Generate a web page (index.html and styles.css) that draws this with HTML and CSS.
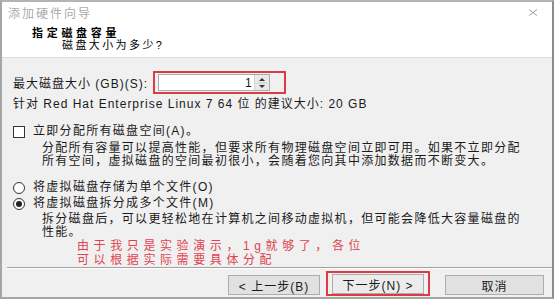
FILE: index.html
```html
<!DOCTYPE html>
<html>
<head>
  <meta charset="utf-8">
  <title>添加硬件向导</title>
  <link rel="stylesheet" href="styles.css">
</head>
<body>
  <div class="wizard">
    <div class="titlebar">
      <span class="title">添加硬件向导</span>
      <svg class="close" width="10" height="7" viewBox="0 0 10 7">
        <path d="M1 0.5 L9 6.5 M9 0.5 L1 6.5" stroke="#9a9a9a" stroke-width="1"/>
      </svg>
    </div>

    <div class="header">
      <div class="heading">指定磁盘容量</div>
      <div class="subheading">磁盘大小为多少?</div>
    </div>

    <div class="content">
      <div class="size-row">
        <label class="size-label">最大磁盘大小 (GB)(S):</label>
        <div class="mark">
          <div class="spinbox">
            <span class="value">1</span>
            <span class="arrows">
              <svg width="14" height="16" viewBox="0 0 14 16">
                <path d="M7 3 L10 6 L4 6 Z" fill="#333"/>
                <path d="M2 8 H12" stroke="#c8c8c8"/>
                <path d="M4 10 L10 10 L7 13 Z" fill="#333"/>
              </svg>
            </span>
          </div>
        </div>
      </div>
      <p class="hint">针对 Red Hat Enterprise Linux 7 64 位 的建议大小: 20 GB</p>

      <div class="option first"><span class="check"></span>立即分配所有磁盘空间(A)。</div>
      <p class="desc">分配所有容量可以提高性能，但要求所有物理磁盘空间立即可用。如果不立即分配<br>所有空间，虚拟磁盘的空间最初很小，会随着您向其中添加数据而不断变大。</p>

      <div class="option radio-first"><span class="radio"></span>将虚拟磁盘存储为单个文件(O)</div>
      <div class="option radio-second"><span class="radio on"></span>将虚拟磁盘拆分成多个文件(M)</div>
      <p class="desc tight">拆分磁盘后，可以更轻松地在计算机之间移动虚拟机，但可能会降低大容量磁盘的<br>性能。</p>

      <p class="note">由于我只是实验演示，1g就够了，各位<br>可以根据实际需要具体分配</p>
    </div>

    <div class="footer">
      <button class="btn prev">&lt; 上一步(B)</button>
      <div class="mark next-mark"><button class="btn next">下一步(N) &gt;</button></div>
      <button class="btn cancel">取消</button>
    </div>
  </div>
</body>
</html>
```

FILE: styles.css
```css
body {
  margin: 0;
  background: #f0f0f0;
  font-family: "Liberation Sans", "Noto Sans CJK SC", sans-serif;
  font-size: 12px;
  letter-spacing: 1.3px;
  color: #1a1a1a;
}

.wizard {
  width: 554px;
  height: 299px;
  box-sizing: border-box;
  border-top: 2px solid #b4b4b4;
  border-left: 2px solid #a6a6a6;
  border-right: 2px solid #8c8c8c;
  border-bottom: 2px solid #a6a6a6;
  background: #f0f0f0;
  display: flex;
  flex-direction: column;
}

.titlebar {
  background: #fff;
  height: 20px;
  display: flex;
  align-items: center;
  justify-content: space-between;
  padding: 0 14px 0 6px;
}

.title {
  color: #ababab;
  font-size: 12px;
  letter-spacing: 2px;
}

.header {
  background: #fff;
  height: 35px;
  border-bottom: 1px solid #dcdcdc;
  padding-left: 30px;
}

.heading {
  font-weight: bold;
  font-size: 11px;
  letter-spacing: 3.7px;
  line-height: 12px;
  margin-top: 5px;
  color: #000;
}

.subheading {
  font-size: 11px;
  letter-spacing: 2.4px;
  line-height: 12px;
  margin: 0 0 0 30px;
  color: #000;
}

.content {
  padding: 0 0 0 11px;
  flex: 1;
}

.size-row {
  display: flex;
  align-items: center;
  margin-top: 13px;
}

.size-label {
  width: 140px;
  white-space: nowrap;
  letter-spacing: 1px;
}

.mark {
  border: 2px solid #dc3a45;
}

.spinbox {
  width: 110px;
  height: 15px;
  margin: 1px 14px 1px 3px;
  background: #fff;
  border: 1px solid #abadb3;
  display: flex;
  justify-content: flex-end;
  align-items: center;
}

.value {
  padding-right: 1px;
}

.arrows {
  width: 14px;
  height: 15px;
  background: #e9e9e9;
  border-left: 1px solid #d0d0d0;
  display: flex;
}

.hint {
  margin: 4px 0 0;
  line-height: 13px;
  letter-spacing: 1px;
}

.option {
  display: flex;
  align-items: center;
  line-height: 13px;
}

.option.first { margin-top: 14px; }
.option.radio-first { margin-top: 13px; }
.option.radio-second { margin-top: 3px; }

.check {
  width: 10px;
  height: 10px;
  border: 1px solid #333;
  background: #fff;
  margin-right: 8px;
}

.radio {
  width: 10px;
  height: 10px;
  border: 1px solid #333;
  border-radius: 50%;
  background: #fff;
  margin-right: 8px;
  position: relative;
}

.radio.on::after {
  content: "";
  position: absolute;
  left: 2px;
  top: 2px;
  width: 6px;
  height: 6px;
  border-radius: 50%;
  background: #222;
}

.desc {
  margin: 4px 0 0 29px;
  line-height: 13px;
}

.desc.tight {
  margin-top: 3px;
}

.note {
  margin: 0 0 0 64px;
  color: #e0434f;
  font-size: 12px;
  letter-spacing: 4.6px;
  line-height: 14px;
}

.footer {
  border-top: 1px solid #a0a0a0;
  box-shadow: inset 0 1px 0 #fff;
  margin: 0 0 0 5px;
  height: 28px;
  display: flex;
  justify-content: flex-end;
  align-items: flex-end;
  padding: 0 8px 1px 0;
}

.btn {
  font-family: inherit;
  font-size: 12px;
  letter-spacing: 1px;
  color: #1a1a1a;
  height: 20px;
  background: #e1e1e1;
  border: 1px solid #adadad;
  padding: 0;
}

.prev {
  width: 92px;
  margin-bottom: 1px;
}

.next-mark {
  margin-left: 6px;
  padding: 1px 4px 0 4px;
}

.next {
  width: 92px;
  background: #ececec;
  display: block;
}

.cancel {
  width: 99px;
  margin-left: 15px;
  margin-bottom: 1px;
}
```
